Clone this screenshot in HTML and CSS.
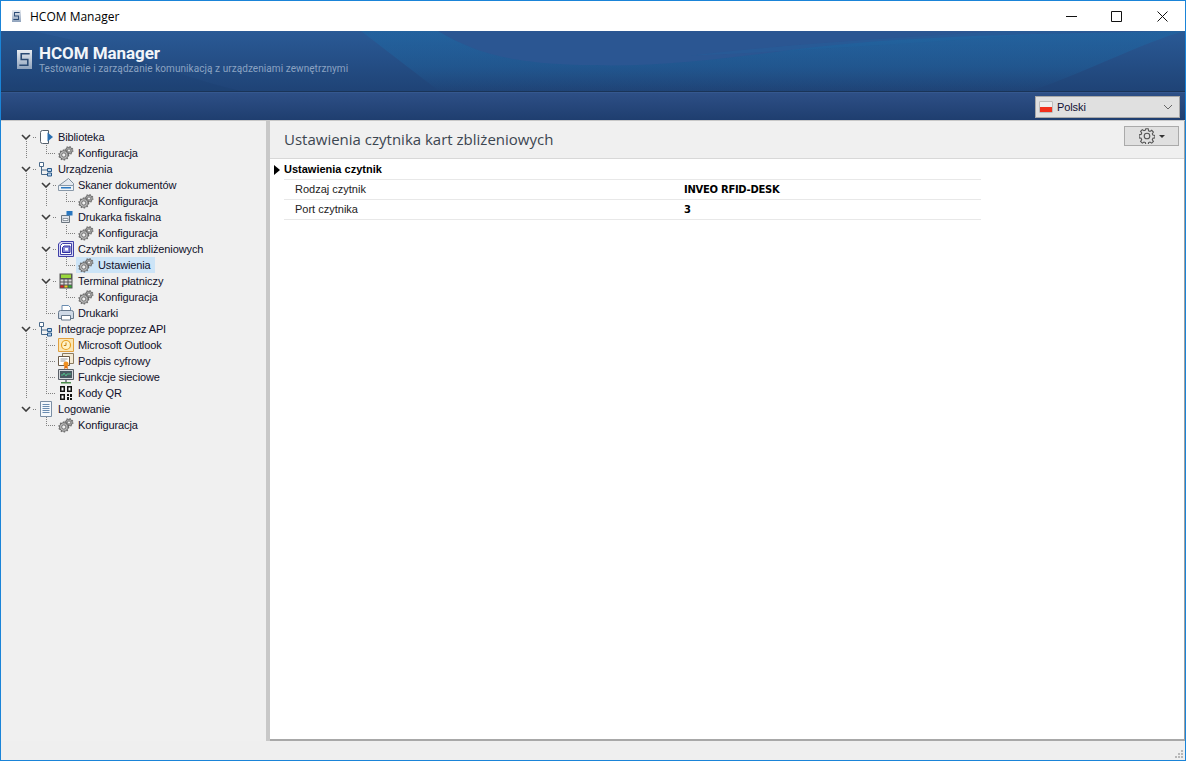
FILE: index.html
```html
<!DOCTYPE html>
<html lang="pl">
<head>
<meta charset="utf-8">
<title>HCOM Manager</title>
<link rel="stylesheet" href="styles.css">
</head>
<body>
<svg class="defs" width="0" height="0">
  <defs>
    <linearGradient id="logoFill" x1="0" y1="0" x2="0" y2="1"><stop offset="0" stop-color="#e8ecf2"/><stop offset="1" stop-color="#8ea2bc"/></linearGradient>
    <symbol id="chev" viewBox="0 0 10 6"><path d="M1 1l4 4 4-4" fill="none" stroke="#3c3c3c" stroke-width="1.6"/></symbol>
    <symbol id="gears" viewBox="0 0 16 16">
      <circle cx="11" cy="5.500" r="3.900" fill="none" stroke="#777" stroke-width="1.200" stroke-dasharray="1.400 1.660"/>
      <circle cx="11" cy="5.500" r="3.300" fill="#b4b4b4" stroke="#5c5c5c" stroke-width=".8"/>
      <circle cx="11" cy="5.500" r="1.600" fill="#f0f0f0" stroke="#555" stroke-width=".7"/>
      <circle cx="5.800" cy="10" r="4.900" fill="none" stroke="#6c6c6c" stroke-width="1.200" stroke-dasharray="1.500 1.580"/>
      <circle cx="5.800" cy="10" r="4.300" fill="#b8b8b8" stroke="#555" stroke-width=".8"/>
      <circle cx="5.800" cy="10" r="2.100" fill="#f0f0f0" stroke="#505050" stroke-width=".7"/>
    </symbol>
    <symbol id="book" viewBox="0 0 16 16">
      <path d="M2.500 3.500q0-2 2-2h6v13h-6q-2 0-2-2z" fill="#fff" stroke="#55606c"/>
      <path d="M9.500 3.500l5.500 4.500-5.500 4.500z" fill="#2a6fb0"/>
    </symbol>
    <symbol id="org" viewBox="0 0 16 16">
      <path d="M1.500 1.500h4v4h-4z" fill="#fff" stroke="#4a6a8a"/>
      <path d="M3.500 5.500v8h6M3.500 9h6" fill="none" stroke="#4a6a8a"/>
      <path d="M9.500 7.500h4v3h-4zM9.500 12h4v3h-4z" fill="#bcd4ec" stroke="#2a5a8a"/>
    </symbol>
    <symbol id="scan" viewBox="0 0 16 16">
      <path d="M1 8.500L10.500 1.500 15.500 6.500v2z" fill="#e4e9ef" stroke="#7f8e9c"/>
      <path d="M.5 8.500h15v5h-15z" fill="#eef2f6" stroke="#8898a8"/>
      <path d="M3 10h10v1.500h-10z" fill="#2a78c0"/>
    </symbol>
    <symbol id="fisc" viewBox="0 0 16 16">
      <path d="M3.500 6.500h8v7h-8z" fill="#dfe3e8" stroke="#6c7680"/>
      <path d="M5 9.500h5v2h-5z" fill="#fff" stroke="#6c7680" stroke-width=".7"/>
      <path d="M8.500 2h6v4.500h-6z" fill="#2a78c0"/>
    </symbol>
    <symbol id="card" viewBox="0 0 16 16">
      <path d="M3 .5h12.500v15h-15v-12.500z" fill="#d8d8f4" stroke="#4040a8"/>
      <path d="M4.500 2.500h9v11h-11v-9z" fill="#fff" stroke="#4040a8"/>
      <path d="M6 5h6v6.500h-7.500v-5z" fill="#8a8ad8" stroke="#3030a0"/>
      <path d="M7 7h3v2.500h-3z" fill="#fff"/>
    </symbol>
    <symbol id="term" viewBox="0 0 16 16">
      <path d="M1.500 .5h13v15h-13z" fill="#555"/>
      <path d="M3 1.500h10v3.500h-10z" fill="#9ad83c"/>
      <path d="M2.500 6.500h3v2h-3zM6.500 6.500h3v2h-3zM10.500 6.500h3v2h-3zM2.500 9.500h3v2h-3zM6.500 9.500h3v2h-3zM10.500 9.500h3v2h-3z" fill="#dcdcdc"/>
      <path d="M2.500 12.500h3v2h-3z" fill="#e02020"/>
      <path d="M6.500 12.500h3v2h-3z" fill="#f0d020"/>
      <path d="M10.500 12.500h3v2h-3z" fill="#30b030"/>
    </symbol>
    <symbol id="print" viewBox="0 0 16 16">
      <path d="M4 .5h6.500l2 2v5h-8.500z" fill="#fff" stroke="#6a8cb0"/>
      <path d="M.5 7.500q0-2 2-2h11q2 0 2 2v6h-15z" fill="#cfd9e6" stroke="#66788c"/>
      <path d="M3.500 10.500h9v4.500h-9z" fill="#fff" stroke="#66788c"/>
    </symbol>
    <symbol id="outl" viewBox="0 0 16 16">
      <path d="M.5 1.500h15v13h-15z" fill="#fbe6b4" stroke="#e0a040"/>
      <circle cx="8" cy="8" r="4.500" fill="#fff3c8" stroke="#e8a020" stroke-width="1.200"/>
      <path d="M8 5.500v3h-2.200" fill="none" stroke="#c88010"/>
    </symbol>
    <symbol id="cert" viewBox="0 0 16 16">
      <path d="M4.500 .5h11v10h-11z" fill="#f4ead4" stroke="#8a7a60"/>
      <path d="M.5 3.500h11v9h-11z" fill="#fff" stroke="#6a5a48"/>
      <path d="M2.500 6h7M2.500 8h5" stroke="#999"/>
      <circle cx="8" cy="11" r="2.500" fill="#f09020"/>
      <path d="M6.500 13l-.5 3 2-1 2 1-.5-3z" fill="#e07010"/>
    </symbol>
    <symbol id="mon" viewBox="0 0 16 16">
      <path d="M.5 .5h15v10h-15z" fill="#d4d8dc" stroke="#5a6068"/>
      <path d="M2 2h12v7h-12z" fill="#4a5a62"/>
      <path d="M3 6h2l1-2 2 3 1-2h4" fill="none" stroke="#50d090" stroke-width=".8"/>
      <path d="M7 11h2v2h-2z" fill="#889"/>
      <path d="M3 13h10v1.500h-10z" fill="#4a8a4a"/>
    </symbol>
    <symbol id="qr" viewBox="0 0 16 16">
      <path d="M2 1h5v6h-5zM9 1h5v6h-5zM2 9h5v6h-5z" fill="#111"/>
      <path d="M3.500 2.500h2v3h-2zM10.500 2.500h2v3h-2zM3.500 10.500h2v3h-2z" fill="#fff"/>
      <path d="M9 9h2v2h-2zM12 9h2v3h-2zM9 12h2v3h-2zM12 13h2v2h-2z" fill="#111"/>
    </symbol>
    <symbol id="doc" viewBox="0 0 16 16">
      <path d="M2.500 .5h11v15h-11z" fill="#f4f8fc" stroke="#7a8ea4"/>
      <path d="M4.500 3.500h7M4.500 5.500h7M4.500 7.500h7M4.500 9.500h7M4.500 11.500h7" stroke="#6a8cb0"/>
    </symbol>
    <symbol id="logo" viewBox="0 0 16 20" preserveAspectRatio="none">
      <path d="M0 0h16v20h-16z" fill="url(#logoFill)"/>
      <path d="M13.500 4H4.500v6H11.500v6H2.500" fill="none" stroke="#2a4a74" stroke-width="1.700"/>
    </symbol>
    <symbol id="bigear" viewBox="0 0 16 16">
      <path d="M6.800 .8h2.400l.4 2 1.400.6 1.700-1.100 1.700 1.700-1.100 1.700.6 1.400 2 .4v2.400l-2 .4-.6 1.400 1.100 1.700-1.700 1.700-1.700-1.100-1.400.6-.4 2H6.800l-.4-2-1.400-.6-1.700 1.100-1.700-1.700 1.100-1.700-.6-1.400-2-.4V6.800l2-.4.6-1.400-1.100-1.700 1.700-1.700 1.700 1.100 1.400-.6z" fill="none" stroke="#555" stroke-width="1.100"/>
      <circle cx="8" cy="8" r="2.800" fill="none" stroke="#555" stroke-width="1.100"/>
    </symbol>
  </defs>
</svg>

<div class="window">
  <div class="titlebar">
    <svg class="title-logo"><use href="#logo"/></svg>
    <span class="title-text">HCOM Manager</span>
    <div class="win-controls">
      <span class="win-btn"><svg width="11" height="11"><path d="M0 5.500h11" stroke="#111"/></svg></span>
      <span class="win-btn"><svg width="11" height="11"><path d="M.5 .5h10v10h-10z" fill="none" stroke="#111"/></svg></span>
      <span class="win-btn win-close"><svg width="11" height="11"><path d="M.5 .5l10 10M10.500 .5l-10 10" fill="none" stroke="#111"/></svg></span>
    </div>
  </div>

  <header class="banner">
    <svg class="banner-waves" viewBox="0 0 1184 61" preserveAspectRatio="none">
      <defs>
        <linearGradient id="tealFade" x1="0" y1="0" x2="0" y2="1"><stop offset="0" stop-color="#1c6aa6" stop-opacity=".5"/><stop offset=".6" stop-color="#1c6aa6" stop-opacity=".32"/><stop offset="1" stop-color="#1c6aa6" stop-opacity="0"/></linearGradient>
      </defs>
      <path d="M360 0L438 61H1030C1090 40 1140 12 1184 0z" fill="url(#tealFade)"/>
      <path d="M437 0C480 26 520 35 610 35C700 35 780 18 870 11C960 4 1060 2 1184 0z" fill="#2b5692"/>
      <path d="M690 25C780 14 880 8 1000 0H1100C960 8 840 18 690 25z" fill="#1f68a4" opacity=".25"/>
      <path d="M30 0C130 20 170 45 240 61H0V0z" fill="#14305c" opacity=".1"/>
    </svg>
    <svg class="banner-logo"><use href="#logo"/></svg>
    <div class="banner-text">
      <h1 class="banner-title">HCOM Manager</h1>
      <p class="banner-sub">Testowanie i zarządzanie komunikacją z urządzeniami zewnętrznymi</p>
    </div>
  </header>

  <div class="toolbar">
    <div class="lang">
      <span class="flag"></span>
      <span class="lang-name">Polski</span>
      <svg class="lang-chev" viewBox="0 0 10 6"><path d="M1 1l4 4 4-4" fill="none" stroke="#666"/></svg>
    </div>
  </div>

  <main class="content">
    <nav class="tree">
      <div class="row"><i class="cell exp more"><svg><use href="#chev"/></svg></i><span class="node"><svg class="ico"><use href="#book"/></svg>Biblioteka</span></div>
      <div class="row"><i class="cell vs"></i><i class="cell ell"></i><span class="node"><svg class="ico"><use href="#gears"/></svg>Konfiguracja</span></div>

      <div class="row"><i class="cell exp more"><svg><use href="#chev"/></svg></i><span class="node"><svg class="ico"><use href="#org"/></svg>Urządzenia</span></div>
      <div class="row"><i class="cell v"></i><i class="cell exp more"><svg><use href="#chev"/></svg></i><span class="node"><svg class="ico"><use href="#scan"/></svg>Skaner dokumentów</span></div>
      <div class="row"><i class="cell v"></i><i class="cell vs"></i><i class="cell ell"></i><span class="node"><svg class="ico"><use href="#gears"/></svg>Konfiguracja</span></div>
      <div class="row"><i class="cell v"></i><i class="cell exp more"><svg><use href="#chev"/></svg></i><span class="node"><svg class="ico"><use href="#fisc"/></svg>Drukarka fiskalna</span></div>
      <div class="row"><i class="cell v"></i><i class="cell vs"></i><i class="cell ell"></i><span class="node"><svg class="ico"><use href="#gears"/></svg>Konfiguracja</span></div>
      <div class="row"><i class="cell v"></i><i class="cell exp more"><svg><use href="#chev"/></svg></i><span class="node"><svg class="ico"><use href="#card"/></svg>Czytnik kart zbliżeniowych</span></div>
      <div class="row"><i class="cell v"></i><i class="cell vs"></i><i class="cell ell"></i><span class="node selected"><svg class="ico"><use href="#gears"/></svg>Ustawienia</span></div>
      <div class="row"><i class="cell v"></i><i class="cell exp more"><svg><use href="#chev"/></svg></i><span class="node"><svg class="ico"><use href="#term"/></svg>Terminal płatniczy</span></div>
      <div class="row"><i class="cell v"></i><i class="cell v"></i><i class="cell ell"></i><span class="node"><svg class="ico"><use href="#gears"/></svg>Konfiguracja</span></div>
      <div class="row"><i class="cell v"></i><i class="cell ell"></i><span class="node"><svg class="ico"><use href="#print"/></svg>Drukarki</span></div>

      <div class="row"><i class="cell exp more"><svg><use href="#chev"/></svg></i><span class="node"><svg class="ico"><use href="#org"/></svg>Integracje poprzez API</span></div>
      <div class="row"><i class="cell v"></i><i class="cell tee"></i><span class="node"><svg class="ico"><use href="#outl"/></svg>Microsoft Outlook</span></div>
      <div class="row"><i class="cell v"></i><i class="cell tee"></i><span class="node"><svg class="ico"><use href="#cert"/></svg>Podpis cyfrowy</span></div>
      <div class="row"><i class="cell v"></i><i class="cell tee"></i><span class="node"><svg class="ico"><use href="#mon"/></svg>Funkcje sieciowe</span></div>
      <div class="row"><i class="cell vs"></i><i class="cell ell"></i><span class="node"><svg class="ico"><use href="#qr"/></svg>Kody QR</span></div>

      <div class="row"><i class="cell exp"><svg><use href="#chev"/></svg></i><span class="node"><svg class="ico"><use href="#doc"/></svg>Logowanie</span></div>
      <div class="row"><i class="cell blank"></i><i class="cell ell"></i><span class="node"><svg class="ico"><use href="#gears"/></svg>Konfiguracja</span></div>
    </nav>

    <div class="splitter"></div>

    <section class="panel">
      <div class="panel-head">
        <h2 class="panel-title">Ustawienia czytnika kart zbliżeniowych</h2>
        <button class="gear-btn" type="button">
          <svg class="gear-ico"><use href="#bigear"/></svg>
          <span class="caret"></span>
        </button>
      </div>
      <div class="props">
        <div class="prop-group"><span class="tri"></span><span class="group-name">Ustawienia czytnik</span></div>
        <div class="prop-row"><span class="prop-label">Rodzaj czytnik</span><span class="prop-value">INVEO RFID-DESK</span></div>
        <div class="prop-row"><span class="prop-label">Port czytnika</span><span class="prop-value">3</span></div>
      </div>
    </section>
  </main>

  <footer class="status">
    <svg class="grip" width="8" height="8"><path d="M6 0h2v2H6zM3 3h2v2H3zM6 3h2v2H6zM0 6h2v2H0zM3 6h2v2H3zM6 6h2v2H6z" fill="#b8b8b8"/></svg>
  </footer>
</div>
</body>
</html>
```
FILE: styles.css
```css
* { box-sizing: border-box; }
html, body { margin: 0; padding: 0; height: 100%; overflow: hidden; }
body { font-family: "Liberation Sans", Arial, sans-serif; font-size: 11px; color: #111; }
.defs { position: absolute; }

.window {
  width: 1186px; height: 761px;
  display: flex; flex-direction: column;
  border: 1px solid #1a84d8;
  background: #f0f0f0;
}

/* title bar */
.titlebar {
  height: 30px; flex: none;
  display: flex; align-items: center;
  background: #fff;
  padding-left: 11px;
}
.title-logo { width: 9px; height: 12px; }
.title-text { margin-left: 9px; font: 12px "Open Sans", sans-serif; color: #000; }
.win-controls { margin-left: auto; display: flex; }
.win-btn { width: 45px; height: 30px; display: flex; align-items: center; justify-content: center; }
.win-close { width: 46px; }

/* banner */
.banner {
  position: relative;
  height: 61px; flex: none;
  display: flex; align-items: flex-start;
  padding: 14px 0 0 16px;
  background: linear-gradient(#2a5a96, #1f4376);
  border-bottom: 1px solid #1a3458;
  overflow: hidden;
}
.banner-waves { position: absolute; inset: 0; width: 100%; height: 100%; }
.banner-logo { position: relative; width: 15px; height: 19px; margin-top: 5px; }
.banner-text { position: relative; margin-left: 7px; }
.banner-title { margin: 0 0 2px; font: 700 17px/16px Roboto, sans-serif; color: #f2f5f9; letter-spacing: -.06px; }
.banner-sub { margin: 0; font: 10px/11px Roboto, sans-serif; color: #8ba3c2; letter-spacing: .07px; }

/* toolbar */
.toolbar {
  height: 28px; flex: none;
  display: flex; justify-content: flex-end; align-items: flex-start;
  padding: 3px 5px 0 0;
  background: linear-gradient(#2d4f86, #1f3e6f);
  border-top: 1px solid #35588f;
}
.lang {
  width: 145px; height: 22px;
  display: flex; align-items: center;
  background: #e0e0e0;
  border: 1px solid #a8a8a8;
  padding: 0 3px;
}
.flag {
  width: 14px; height: 12px;
  background: linear-gradient(#eeeeee 0 50%, #f2301c 50%);
  border: 1px solid #bcbcbc;
  border-radius: 1px;
}
.lang-name { margin-left: 4px; color: #111133; font-size: 11px; letter-spacing: -.1px; }
.lang-chev { margin-left: auto; width: 10px; height: 6px; margin-right: 3px; }

/* content */
.content { flex: 1; display: flex; min-height: 0; border-top: 1px solid #c8c8c8; }

.tree { width: 265px; flex: none; padding: 8px 0 0 15px; background: #f0f0f0; }
.row { display: flex; height: 16px; }
.cell { width: 20px; height: 16px; flex: none; display: block; position: relative; background-repeat: no-repeat; }
.cell svg { position: absolute; left: 5px; top: 5px; width: 10px; height: 6px; }

.v, .vs, .tee, .ell, .exp.more, .exp {
  --dots: repeating-linear-gradient(to bottom, #808080 0 1px, transparent 1px 2px);
  --hdots: repeating-linear-gradient(to right, #808080 0 1px, transparent 1px 2px);
}
.v { background-image: var(--dots); background-size: 1px 100%; background-position: 10px 0; }
.vs { background-image: var(--dots); background-size: 1px 14px; background-position: 10px 0; }
.ell { background-image: var(--dots), var(--hdots); background-size: 1px 9px, 12px 1px; background-position: 10px 0, 10px 8px; }
.tee { background-image: var(--dots), var(--hdots); background-size: 1px 100%, 12px 1px; background-position: 10px 0, 10px 8px; }
.exp { background-image: var(--hdots); background-size: 5px 1px; background-position: 17px 8px; }
.exp.more { background-image: var(--hdots), var(--dots); background-size: 4px 1px, 1px 4px; background-position: 17px 8px, 10px 12px; }

.node { display: inline-flex; align-items: center; height: 16px; padding: 0 4px 0 2px; white-space: nowrap; color: #10102a; letter-spacing: -.12px; }
.ico { width: 16px; height: 16px; margin-right: 4px; flex: none; }
.selected { background: #cce4f7; }

.splitter { width: 4px; flex: none; background: #c8c8c8; }

/* panel */
.panel {
  flex: 1; min-width: 0;
  display: flex; flex-direction: column;
  background: #fff;
  border-right: 1px solid #a0a0a0;
  border-bottom: 2px solid #a8a8a8;
}
.panel-head {
  height: 38px; flex: none;
  display: flex; align-items: flex-start; justify-content: space-between;
  background: #f0f0f0;
  border-bottom: 1px solid #d8d8d8;
  padding: 5px 5px 0 14px;
}
.panel-title { margin: 2px 0 0; font: 400 15px/22px "Open Sans", sans-serif; color: #3c4650; }
.gear-btn {
  width: 55px; height: 20px; padding: 0;
  display: flex; align-items: center; justify-content: center; gap: 4px;
  background: #e0e0e0;
  border: 1px solid #aaa;
}
.gear-ico { width: 16px; height: 16px; }
.caret { width: 0; height: 0; border: 3px solid transparent; border-top: 3px solid #333; border-bottom: 0; }

.props { width: 711px; padding: 1px 0 0 4px; }
.prop-group { display: flex; align-items: center; height: 20px; }
.tri { width: 0; height: 0; border-left: 6px solid #000; border-top: 5px solid transparent; border-bottom: 5px solid transparent; }
.group-name { margin-left: 4px; flex: 1; height: 20px; line-height: 18px; font-weight: 700; font-size: 11px; color: #000; border-bottom: 1px solid #e8e8e8; }
.prop-row {
  display: grid; grid-template-columns: 389px 1fr;
  align-items: center;
  height: 20px; margin-left: 10px; padding-left: 11px;
  border-bottom: 1px solid #e8e8e8;
}
.prop-label { color: #222; margin-bottom: 2px; }
.prop-value { font: 700 10px "DejaVu Sans", sans-serif; color: #000; letter-spacing: -.28px; }

/* status bar */
.status {
  height: 19px; flex: none;
  display: flex; align-items: flex-end; justify-content: flex-end;
  background: #efefef;
  padding: 0 2px 2px 0;
}
```
